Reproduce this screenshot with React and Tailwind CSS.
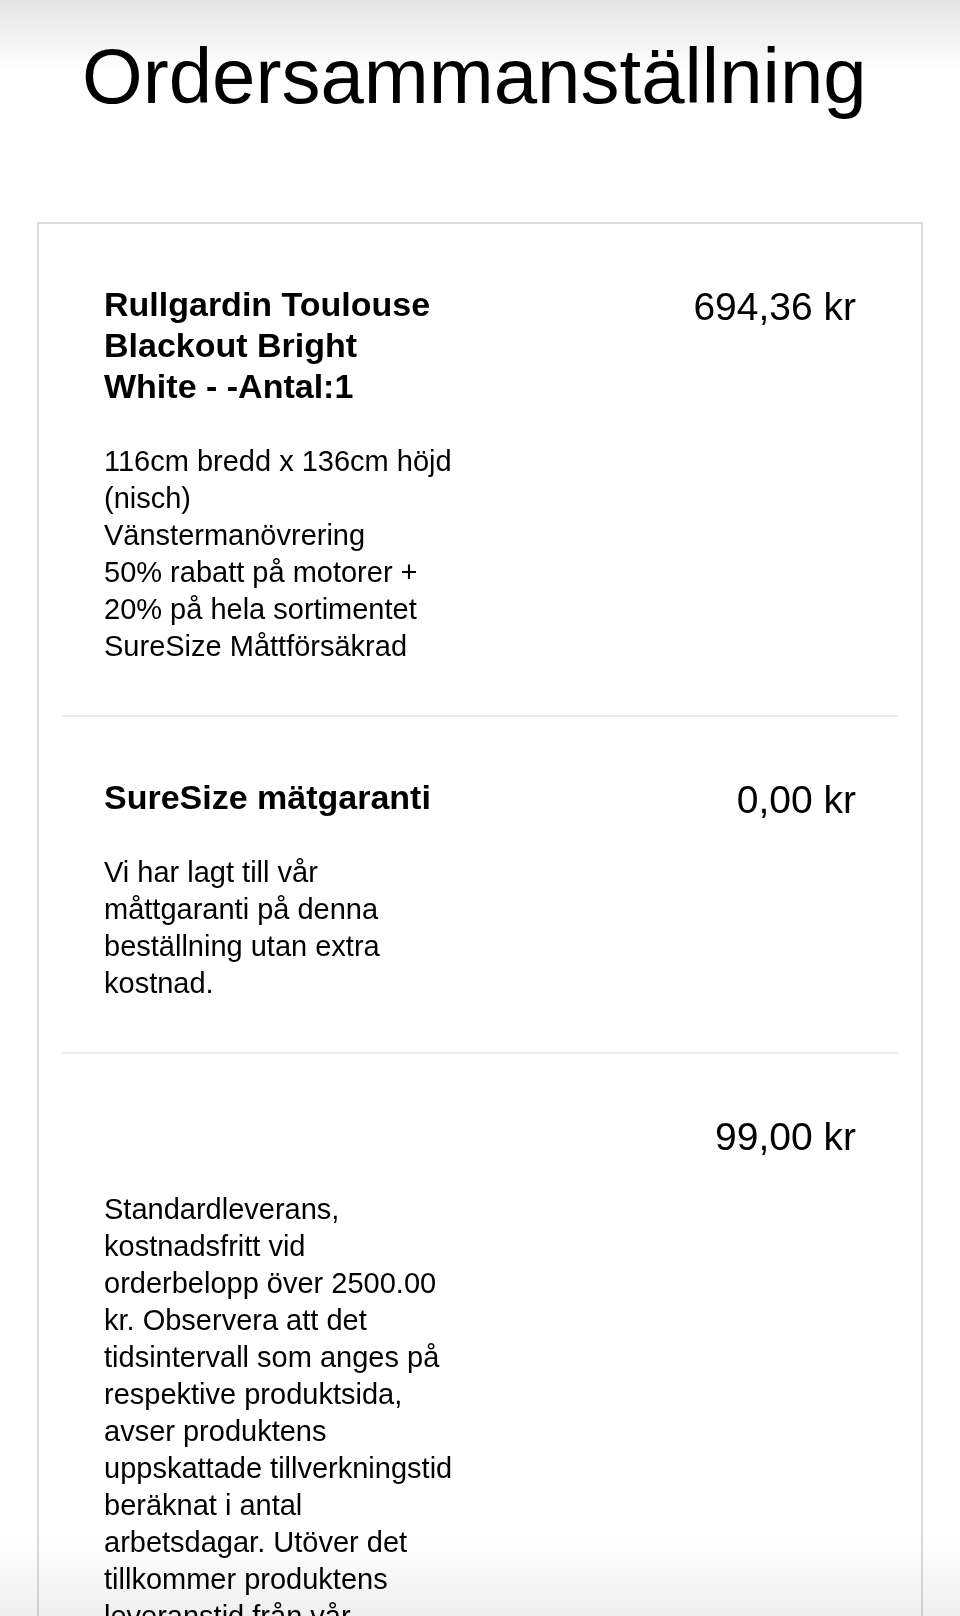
const lines = [
	{
		title: 'Rullgardin Toulouse Blackout Bright White - -Antal:1',
		price: '694,36 kr',
		details: [
			'116cm bredd x 136cm höjd (nisch)',
			'Vänstermanövrering',
			'50% rabatt på motorer + 20% på hela sortimentet',
			'SureSize Måttförsäkrad',
		],
	},
	{
		title: 'SureSize mätgaranti',
		price: '0,00 kr',
		details: ['Vi har lagt till vår måttgaranti på denna beställning utan extra kostnad.'],
	},
	{
		title: '',
		price: '99,00 kr',
		details: [
			'Standardleverans, kostnadsfritt vid orderbelopp över 2500.00 kr. Observera att det tidsintervall som anges på respektive produktsida, avser produktens uppskattade tillverkningstid beräknat i antal arbetsdagar. Utöver det tillkommer produktens leveranstid från vår leverantör.',
		],
	},
]

function OrderLine({ line, last }) {
	return (
		<div className={`flex items-start justify-between px-[42px] pt-[60px] pb-[50px] ${last ? '' : 'border-b-2 border-[#ececec]'}`}>
			<div className="w-[352px]">
				<h3 className="text-[34px] leading-[41px] font-bold">{line.title || '\u00a0'}</h3>
				<div className="mt-[36px] text-[29px] leading-[37px]">
					{line.details.map((d) => (
						<p key={d}>{d}</p>
					))}
				</div>
			</div>
			<div className="mt-[2px] text-[39px] leading-[41px] whitespace-nowrap">{line.price}</div>
		</div>
	)
}

export default function App() {
	return (
		<div className="relative h-[1616px] overflow-hidden bg-white text-black font-['Liberation_Sans',Arial,sans-serif]">
			<h1 className="pt-[37px] pl-[82px] text-[78px] leading-[78px] font-normal">Ordersammanställning</h1>

			<div className="mx-[37px] mt-[107px] border-2 border-[#dcdcdc] px-[23px]">
				{lines.map((line, i) => (
					<OrderLine key={i} line={line} last={i === lines.length - 1} />
				))}
			</div>

			{/* soft shade along the top and bottom edges */}
			<div className="pointer-events-none absolute inset-x-0 top-0 h-[72px] bg-linear-to-b from-[#e4e4e4] to-white mix-blend-multiply" />
			<div className="pointer-events-none absolute inset-x-0 bottom-0 h-[80px] bg-linear-to-t from-[#efefef] to-white mix-blend-multiply" />
		</div>
	)
}
